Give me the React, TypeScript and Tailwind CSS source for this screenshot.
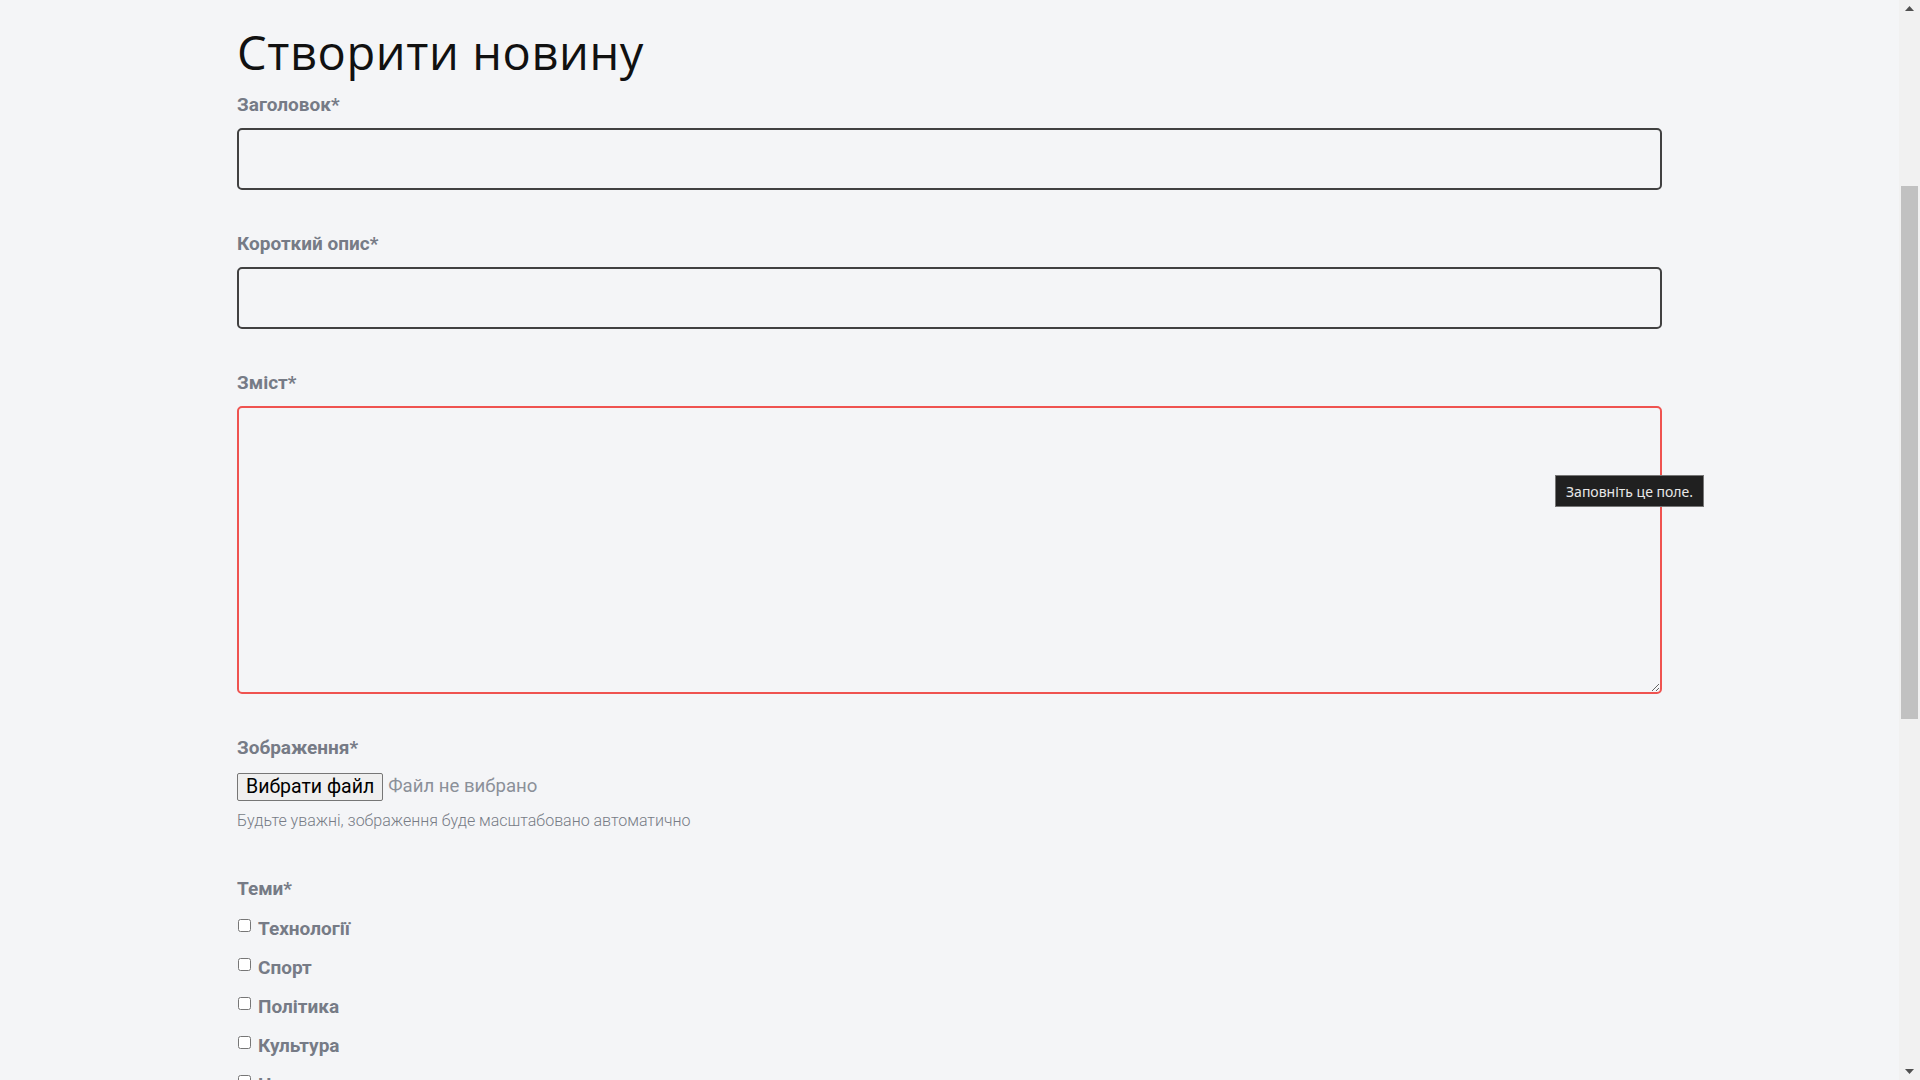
import React from "react";

const topics = ["Технології", "Спорт", "Політика", "Культура", "Наука"];

function Label({ children }: { children: React.ReactNode }) {
  return (
    <label className="block text-[19px] leading-[24px] font-bold text-[#767b86] [font-family:Roboto,'Liberation_Sans',sans-serif]">
      {children}
    </label>
  );
}

function Scrollbar() {
  return (
    <div className="flex h-full w-[21px] shrink-0 flex-col bg-[#f1f1f1]">
      <div className="flex h-[17px] items-center justify-center">
        <svg width="9" height="5" viewBox="0 0 9 5">
          <polygon points="4.5,0 9,5 0,5" fill="#505050" />
        </svg>
      </div>
      <div className="flex flex-1 flex-col px-[2px] pt-[169px]">
        <div className="h-[533px] w-full bg-[#c1c1c1]" />
      </div>
      <div className="flex h-[17px] items-center justify-center">
        <svg width="9" height="5" viewBox="0 0 9 5">
          <polygon points="0,0 9,0 4.5,5" fill="#505050" />
        </svg>
      </div>
    </div>
  );
}

export default function App() {
  return (
    <div className="flex h-[1080px] w-full overflow-hidden bg-[#f4f5f7]">
      <main className="flex-1 pl-[237px]">
        <div className="w-[1425px]">
          <h1 className="mt-[24px] text-[47px] leading-[56px] font-normal tracking-[0.6px] text-[#111] [font-family:'Open_Sans','Noto_Sans',sans-serif]">
            Створити новину
          </h1>
          <form className="mt-[13px] flex flex-col">
            <Label>Заголовок*</Label>
            <input
              type="text"
              className="mt-[11px] h-[62px] w-full rounded-[5px] border-2 border-[#414141] bg-transparent px-3 outline-none"
            />
            <div className="mt-[42px]">
              <Label>Короткий опис*</Label>
            </div>
            <input
              type="text"
              className="mt-[11px] h-[62px] w-full rounded-[5px] border-2 border-[#414141] bg-transparent px-3 outline-none"
            />
            <div className="mt-[42px]">
              <Label>Зміст*</Label>
            </div>
            <div className="relative mt-[11px]">
              <textarea className="block h-[288px] w-full resize-y rounded-[5px] border-2 border-[#ef5350] bg-transparent p-3 outline-none" />
              <div className="absolute left-[1318px] top-[69px] flex h-[32px] w-[149px] items-center justify-center border border-[#767676] bg-[#202020] text-[14px] text-[#e8e8e8] [font-family:'Noto_Sans','Open_Sans',sans-serif]">
                Заповніть це поле.
              </div>
            </div>
            <div className="mt-[42px]">
              <Label>Зображення*</Label>
            </div>
            <div className="mt-[13px] flex items-center gap-[5px] [font-family:Roboto,'Liberation_Sans',sans-serif]">
              <button
                type="button"
                className="flex h-[28px] items-center justify-center rounded-[2px] border border-[#767676] bg-[#efefef] px-[8px] text-[19.5px] text-black"
              >
                Вибрати файл
              </button>
              <span className="text-[18.6px] text-[#8b9099]">Файл не вибрано</span>
            </div>
            <p className="mt-[10px] text-[16px] leading-[20px] font-light text-[#777c86] [font-family:Roboto,'Liberation_Sans',sans-serif]">
              Будьте уважні, зображення буде масштабовано автоматично
            </p>
            <div className="mt-[46px]">
              <Label>Теми*</Label>
            </div>
            <div className="mt-[16px] flex flex-col gap-[15px]">
              {topics.map((t) => (
                <div key={t} className="flex h-[24px] items-start gap-[7px]">
                  <input type="checkbox" className="m-0 ml-[1px] mt-[2px] h-[13px] w-[13px]" />
                  <span className="text-[19px] leading-[24px] font-bold text-[#767b86] [font-family:Roboto,'Liberation_Sans',sans-serif]">
                    {t}
                  </span>
                </div>
              ))}
            </div>
          </form>
        </div>
      </main>
      <Scrollbar />
    </div>
  );
}
